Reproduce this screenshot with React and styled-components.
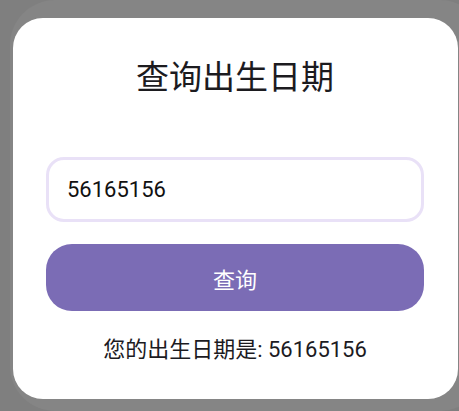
import styled, { createGlobalStyle } from 'styled-components';

const GlobalStyle = createGlobalStyle`
  html, body {
    margin: 0;
    padding: 0;
    background: #7f7f7f;
  }
  body {
    font-family: Roboto, "Noto Sans CJK SC", sans-serif;
  }
`;

const Page = styled.div`
  width: 459px;
  height: 411px;
  box-sizing: border-box;
  padding: 18px 1px 12px 13px;
  overflow: hidden;
`;

const Card = styled.div`
  width: 445px;
  box-sizing: border-box;
  background: #ffffff;
  border-radius: 30px;
  padding: 37px 34px 34px 33px;
  display: flex;
  flex-direction: column;
  box-shadow: 12px -3px 0 15px #858585;
`;

const Title = styled.h1`
  margin: 0;
  font-size: 33px;
  font-weight: 400;
  line-height: 45px;
  text-align: center;
  color: #1c1b1f;
`;

const Input = styled.input`
  margin-top: 57px;
  height: 65px;
  box-sizing: border-box;
  border: 3px solid #e9e1f7;
  border-radius: 18px;
  padding: 0 18px;
  font-family: inherit;
  font-size: 22px;
  color: #111111;
  outline: none;
  background: #ffffff;
`;

const Button = styled.button`
  margin-top: 22px;
  height: 67px;
  border: none;
  border-radius: 26px;
  background: #7b6cb5;
  color: #ffffff;
  font-family: inherit;
  font-size: 22px;
  cursor: pointer;
`;

const Result = styled.p`
  margin: 24px 0 0;
  font-size: 22px;
  line-height: 30px;
  text-align: center;
  color: #1c1b1f;
`;

const App = () => {
  const birth = '56165156';

  return (
    <Page>
      <GlobalStyle />
      <Card>
        <Title>查询出生日期</Title>
        <Input defaultValue={birth} />
        <Button>查询</Button>
        <Result>您的出生日期是: {birth}</Result>
      </Card>
    </Page>
  );
};

export default App;
